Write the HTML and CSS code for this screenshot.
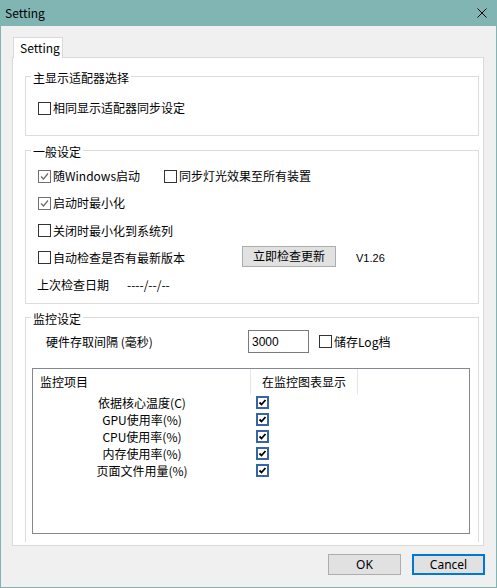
FILE: index.html
```html
<!DOCTYPE html>
<html lang="zh-CN">
<head>
    <meta charset="UTF-8">
    <title>Setting</title>
    <link rel="stylesheet" href="styles.css">
</head>
<body>
<div class="window">

    <!-- Title bar -->
    <div class="titlebar">
        <span class="title">Setting</span>
        <svg class="close" width="10" height="10" viewBox="0 0 10 10">
            <path d="M0.5 0.5 L9.5 9.5 M9.5 0.5 L0.5 9.5" stroke="#000" stroke-width="1"/>
        </svg>
    </div>

    <div class="content">
        <div class="tabs">
            <div class="tab">Setting</div>
        </div>

        <div class="panel">
            <div class="panel-inner">

                <!-- Display adapter -->
                <div class="group group-display">
                    <div class="legend">主显示适配器选择</div>
                    <div class="row row-first">
                        <label class="check"><span class="box"></span>相同显示适配器同步设定</label>
                    </div>
                </div>

                <!-- General -->
                <div class="group group-general">
                    <div class="legend">一般设定</div>
                    <div class="rows">
                        <div class="row">
                            <label class="check col-start"><span class="box checked"><svg viewBox="0 0 11 11"><polyline points="2,5.5 4.5,8 9,2.5" fill="none" stroke="#6a6a6a" stroke-width="1.2"/></svg></span>随Windows启动</label>
                            <label class="check"><span class="box"></span>同步灯光效果至所有装置</label>
                        </div>
                        <div class="row">
                            <label class="check"><span class="box checked"><svg viewBox="0 0 11 11"><polyline points="2,5.5 4.5,8 9,2.5" fill="none" stroke="#6a6a6a" stroke-width="1.2"/></svg></span>启动时最小化</label>
                        </div>
                        <div class="row">
                            <label class="check"><span class="box"></span>关闭时最小化到系统列</label>
                        </div>
                        <div class="row">
                            <label class="check col-update"><span class="box"></span>自动检查是否有最新版本</label>
                            <button class="btn btn-update">立即检查更新</button>
                            <span class="version">V1.26</span>
                        </div>
                        <div class="row row-date">
                            <span class="date-label">上次检查日期</span>
                            <span class="date-value">----/--/--</span>
                        </div>
                    </div>
                </div>

                <!-- Monitor -->
                <div class="group group-monitor">
                    <div class="legend">监控设定</div>
                    <div class="row row-interval">
                        <span class="interval-label">硬件存取间隔 (毫秒)</span>
                        <input class="field" type="text" value="3000">
                        <label class="check log-check"><span class="box"></span>储存Log档</label>
                    </div>

                    <div class="list">
                        <div class="list-head">
                            <div class="head-cell head-name">监控项目</div>
                            <div class="head-cell head-show">在监控图表显示</div>
                        </div>
                        <div class="list-row">
                            <span class="cell-name">依据核心温度(C)</span>
                            <span class="cell-show"><span class="tick"><svg viewBox="0 0 9 9"><polyline points="1.5,4.5 3.5,6.5 7.5,2" fill="none" stroke="#000" stroke-width="1.8"/></svg></span></span>
                        </div>
                        <div class="list-row">
                            <span class="cell-name">GPU使用率(%)</span>
                            <span class="cell-show"><span class="tick"><svg viewBox="0 0 9 9"><polyline points="1.5,4.5 3.5,6.5 7.5,2" fill="none" stroke="#000" stroke-width="1.8"/></svg></span></span>
                        </div>
                        <div class="list-row">
                            <span class="cell-name">CPU使用率(%)</span>
                            <span class="cell-show"><span class="tick"><svg viewBox="0 0 9 9"><polyline points="1.5,4.5 3.5,6.5 7.5,2" fill="none" stroke="#000" stroke-width="1.8"/></svg></span></span>
                        </div>
                        <div class="list-row">
                            <span class="cell-name">内存使用率(%)</span>
                            <span class="cell-show"><span class="tick"><svg viewBox="0 0 9 9"><polyline points="1.5,4.5 3.5,6.5 7.5,2" fill="none" stroke="#000" stroke-width="1.8"/></svg></span></span>
                        </div>
                        <div class="list-row">
                            <span class="cell-name">页面文件用量(%)</span>
                            <span class="cell-show"><span class="tick"><svg viewBox="0 0 9 9"><polyline points="1.5,4.5 3.5,6.5 7.5,2" fill="none" stroke="#000" stroke-width="1.8"/></svg></span></span>
                        </div>
                    </div>
                </div>

            </div>
        </div>

        <!-- Dialog buttons -->
        <div class="actions">
            <button class="btn btn-dialog">OK</button>
            <button class="btn btn-dialog btn-default">Cancel</button>
        </div>
    </div>
</div>
</body>
</html>
```

FILE: styles.css
```css
body {
    margin: 0;
    font-family: "Noto Sans CJK SC", "Noto Sans", sans-serif;
    font-size: 12px;
    color: #000;
    background: #f0f0f0;
}

/* Window frame */
.window {
    width: 497px;
    height: 588px;
    box-sizing: border-box;
    border: 1px solid #80b5b3;
    border-top: none;
    background: #f0f0f0;
}

.titlebar {
    height: 26px;
    background: #80b5b3;
    display: flex;
    align-items: center;
    justify-content: space-between;
    padding: 0 9px 0 4px;
}

.title {
    font-size: 12px;
    line-height: 16px;
}

.close {
    display: block;
}

.content {
    padding: 11px 12px 0 11px;
}

/* Tab strip */
.tabs {
    display: flex;
}

.tab {
    position: relative;
    z-index: 1;
    width: 50px;
    height: 21px;
    box-sizing: border-box;
    margin-left: 1px;
    margin-bottom: -1px;
    padding-left: 6px;
    background: #fff;
    border: 1px solid #d9d9d9;
    border-bottom: none;
    line-height: 19px;
}

.panel {
    height: 489px;
    box-sizing: border-box;
    background: #fff;
    border: 1px solid #d9d9d9;
    padding: 10px 4px 3px 12px;
    display: flex;
    flex-direction: column;
}

/* clips the bottom of the last group like the real dialog */
.panel-inner {
    flex: 1;
    overflow: hidden;
    padding-top: 8px;
}

/* Group boxes */
.group {
    box-sizing: border-box;
    border: 1px solid #dcdcdc;
    padding-left: 12px;
}

.legend {
    width: fit-content;
    height: 16px;
    line-height: 16px;
    margin: -7px 0 0 -7px;
    padding: 0 2px;
    background: #fff;
}

.group-display {
    height: 60px;
}

.group-general {
    height: 154px;
    margin-top: 14px;
}

.group-monitor {
    height: 260px;
    margin-top: 13px;
    padding-left: 6px;
}

.group-monitor .legend {
    margin-left: -1px;
}

.row {
    display: flex;
    align-items: center;
    height: 20px;
}

.row-first {
    margin-top: 12px;
}

.rows {
    display: flex;
    flex-direction: column;
    gap: 7.3px;
    margin-top: 6px;
}

/* Checkboxes */
.check {
    display: flex;
    align-items: center;
    gap: 2px;
    line-height: 16px;
    white-space: nowrap;
}

.box {
    width: 13px;
    height: 13px;
    box-sizing: border-box;
    border: 1px solid #333;
    background: #fff;
    display: block;
}

.box.checked {
    border-color: #707070;
}

.box svg {
    display: block;
    width: 11px;
    height: 11px;
}

.col-start {
    width: 126px;
}

.col-update {
    width: 204px;
}

.btn {
    font-family: "Noto Sans CJK SC", sans-serif;
    font-size: 12px;
    color: #000;
    background: #e1e1e1;
    border: 1px solid #adadad;
    padding: 0;
    margin: 0;
    line-height: 16px;
}

.btn-update {
    width: 94px;
    height: 21px;
    margin-top: -3px;
}

.version {
    margin-left: 20px;
    font-family: "Liberation Sans", sans-serif;
    font-size: 11px;
}

.row-date {
    line-height: 16px;
}

.date-label {
    width: 90px;
    margin-left: -1px;
}

/* Monitor settings */
.row-interval {
    height: 23px;
    margin-top: 3px;
}

.interval-label {
    width: 202px;
    padding-left: 14px;
    line-height: 16px;
}

.field {
    width: 61px;
    height: 23px;
    box-sizing: border-box;
    border: 1px solid #7a7a7a;
    padding: 0 0 0 3px;
    font-family: "Liberation Sans", sans-serif;
    font-size: 12px;
    color: #000;
    outline: none;
}

.log-check {
    margin-left: 10px;
}

/* List view */
.list {
    width: 438px;
    height: 166px;
    box-sizing: border-box;
    margin-top: 15px;
    border: 1px solid #828790;
}

.list-head {
    display: flex;
    height: 25px;
}

.head-cell {
    box-sizing: border-box;
    border-right: 1px solid #e5e5e5;
    line-height: 25px;
}

.head-name {
    width: 218px;
    padding-left: 7px;
}

.head-show {
    width: 107px;
    padding-left: 11px;
}

.list-row {
    display: flex;
    align-items: center;
    height: 17px;
    line-height: 17px;
}

.cell-name {
    width: 218px;
    text-align: center;
}

.cell-show {
    padding-left: 5px;
}

.tick {
    display: block;
    width: 13px;
    height: 13px;
    box-sizing: border-box;
    border: 2px solid #3465a4;
    background: #fff;
}

.tick svg {
    display: block;
    width: 9px;
    height: 9px;
}

/* Dialog buttons */
.actions {
    display: flex;
    justify-content: flex-end;
    gap: 11px;
    margin-top: 8px;
    margin-right: -1px;
}

.btn-dialog {
    width: 73px;
    height: 21px;
    font-family: "Noto Sans", sans-serif;
}

.btn-default {
    border: 2px solid #0078d7;
}
```
